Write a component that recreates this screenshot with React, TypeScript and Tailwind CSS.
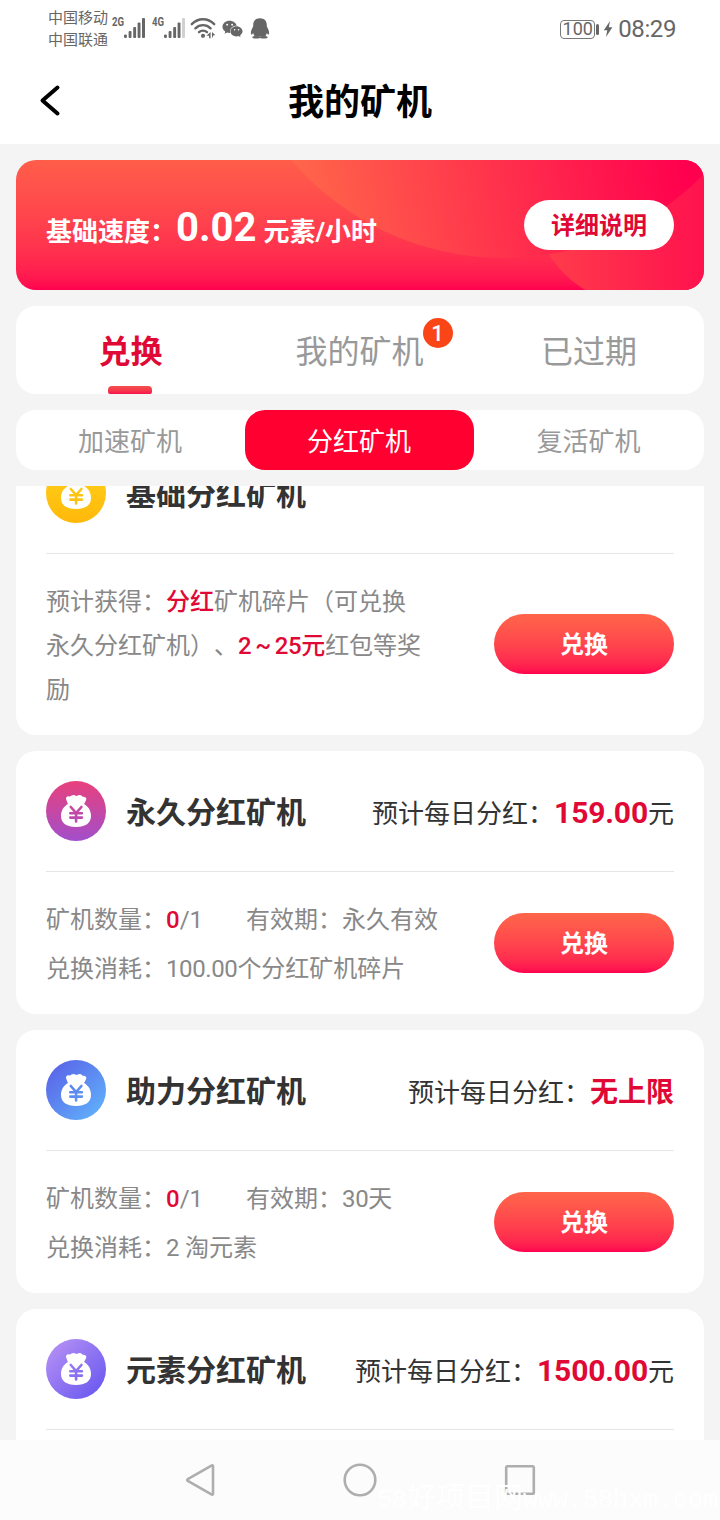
import React, { useState } from 'react'
import { FaWeixin } from 'react-icons/fa'

interface Miner {
  id: string
  name: string
  from: string
  to: string
  direction: 'down' | 'diagonal'
  daily: string
  unit?: string
  owned: string
  limit: string
  validity: string
  cost: string
}

const miners: Miner[] = [
  { id: 'forever', name: '永久分红矿机', from: '#e8407c', to: '#a24fcb', direction: 'down', daily: '159.00', unit: '元', owned: '0', limit: '1', validity: '永久有效', cost: '100.00个分红矿机碎片' },
  { id: 'boost', name: '助力分红矿机', from: '#5a68e8', to: '#60acfa', direction: 'diagonal', daily: '无上限', owned: '0', limit: '1', validity: '30天', cost: '2 淘元素' },
  { id: 'element', name: '元素分红矿机', from: '#b08cf4', to: '#6e5cf0', direction: 'diagonal', daily: '1500.00', unit: '元', owned: '0', limit: '1', validity: '30天', cost: '10 淘元素' },
]

const tabs = ['兑换', '我的矿机', '已过期']
const kinds = ['加速矿机', '分红矿机', '复活矿机']

// Sets runs of digits a little tighter than the Chinese text around them
const Mixed: React.FC<{ text: string }> = ({ text }) => (
  <>
    {text.split(/([\d.]+)/).map((part, i) => (i % 2 ? <span key={i} className="tracking-[-0.4px]">{part}</span> : part))}
  </>
)

const Signal: React.FC<{ label: string; weak?: boolean }> = ({ label, weak }) => (
  <div className="flex h-[22px] w-[33px] items-start">
    <span className="w-3 origin-left scale-x-[0.8] text-[12px] font-bold leading-[11px]">{label}</span>
    <svg width="21" height="22" viewBox="0 0 21 22" fill="currentColor" className="shrink-0">
      <rect x="0" y="17.5" width="2.9" height="3.5" rx="1.2" />
      <rect x="4.6" y="14" width="2.9" height="7" rx="1" />
      <rect x="9.2" y="10" width="2.9" height="11" rx="1" />
      <rect x="13.6" y="5.5" width="2.9" height="15.500" rx="1" />
      <rect x="18" y="1" width="3" height="20" rx="1" opacity={weak ? 0.3 : 1} />
    </svg>
  </div>
)

const StatusBar = () => (
  <div className="flex h-[58px] items-start bg-white pl-12 pr-[44px] text-[#666]">
    <div className="mt-[7px] w-[64px] shrink-0 text-[15px] leading-[22px]">
      <div>中国移动</div>
      <div>中国联通</div>
    </div>
    <div className="mt-[17px] flex">
      <Signal label="2G" />
      <div className="w-[7px]" />
      <Signal label="4G" weak />
      {/* Wifi with the traffic arrows */}
      <svg width="26" height="22" viewBox="0 0 26 22" fill="none" stroke="currentColor" strokeWidth="2.4" strokeLinecap="round" className="ml-[5px]">
        <path d="M1.800 7.200C8.200.6 17.800.6 24.200 7.200" />
        <path d="M5.400 11.300c4.300-4.200 10.900-4.200 15.200 0" />
        <path d="M9 15.200c2.300-2.100 5.700-2.100 8 0" />
        <circle cx="13" cy="18.800" r="2.100" fill="currentColor" stroke="none" />
        <path d="M20.600 15v6.200h-1.500v-2.400h-2.600zM22 21.200V15l3.400 3.200h-1.900z" fill="currentColor" stroke="none" />
      </svg>
      <FaWeixin className="ml-[6px] mt-[2px] h-5 w-[21px]" />
      {/* Penguin */}
      <svg width="20" height="23" viewBox="0 0 20 22" fill="currentColor" className="ml-[7px]">
        <path d="M10 .8C5.700.8 3.200 3.600 3.200 7.300v1.500C2.400 11 .900 12.700.900 15.300c0 1.600.5 2 1 1.700.5-.3 1-.9 1.300-1.400.3 1.300.8 2.500 1.700 3.300h10.200c.9-.8 1.400-2 1.700-3.300.3.5.8 1.100 1.300 1.400.5.3 1-.1 1-1.700 0-2.600-1.500-4.300-2.300-6.500V7.300C16.800 3.600 14.300.8 10 .8z" />
        <ellipse cx="6.300" cy="19.800" rx="4" ry="1.300" />
        <ellipse cx="13.700" cy="19.800" rx="4" ry="1.300" />
      </svg>
    </div>
    <div className="ml-auto mt-[15px] flex h-7 items-center">
      <span className="flex h-[19px] w-[35px] items-center justify-center rounded-[4px] border border-[#777] text-[18px] leading-none">100</span>
      <span className="ml-px h-[11px] w-[3px] rounded-sm bg-[#666]" />
      <svg width="10" height="18" viewBox="0 0 10 18" fill="currentColor" className="ml-[4px]">
        <path d="M7 1 .8 10.200h3.500L3 17l6.400-9.700H5.800z" />
      </svg>
      <span className="ml-[5px] text-[24px] leading-7 tracking-[-0.4px]">08:29</span>
    </div>
  </div>
)

const Header = () => (
  <div className="relative flex h-[86px] items-center justify-center bg-white text-black">
    <svg width="24" height="34" viewBox="0 0 24 34" fill="none" stroke="currentColor" strokeWidth="4" strokeLinecap="round" strokeLinejoin="round" className="absolute left-[38px] top-[26px]">
      <path d="M19.500 3.500 4.500 16.500l15 13" />
    </svg>
    <h1 className="pt-1 text-[36px] font-bold leading-[52px]">我的矿机</h1>
  </div>
)

const Banner = () => (
  <div className="relative flex h-[130px] items-center overflow-hidden rounded-[20px] bg-gradient-to-b from-[#ff5d4a] to-[#ff004f] px-[30px] text-white">
    <svg width="688" height="130" className="absolute inset-0">
      <defs>
        <linearGradient id="big" x1="290" x2="670" y1="60" y2="0" gradientUnits="userSpaceOnUse">
          <stop offset="0" stopColor="#ff654a" />
          <stop offset="1" stopColor="#ff004e" />
        </linearGradient>
        <linearGradient id="small" x1="530" x2="700" y1="0" y2="0" gradientUnits="userSpaceOnUse">
          <stop offset="0" stopColor="#ff3c4b" />
          <stop offset="1" stopColor="#ff0f4e" />
        </linearGradient>
      </defs>
      <circle cx="624" cy="38" r="107" fill="url(#small)" />
      <circle cx="488" cy="-182" r="280" fill="url(#big)" />
    </svg>
    <p className="relative flex items-baseline pt-[10px] text-[26px] font-bold leading-[60px]">
      基础速度：<span className="text-[40px]">0.02</span>
      <span className="ml-[7px]">元素/小时</span>
    </p>
    <button className="relative ml-auto h-[50px] w-[150px] rounded-full bg-white pt-[2px] text-[24px] font-bold text-[#e00936]">详细说明</button>
  </div>
)

const CoinBag: React.FC<{ id: string; from: string; to: string; direction: 'down' | 'diagonal' }> = ({ id, from, to, direction }) => (
  <svg width="60" height="60" viewBox="0 0 60 60" className="shrink-0">
    <defs>
      <linearGradient id={`bag-${id}`} gradientUnits="userSpaceOnUse" x1={direction === 'down' ? 30 : 8} y1={direction === 'down' ? 0 : 8} x2={direction === 'down' ? 30 : 52} y2={direction === 'down' ? 60 : 52}>
        <stop offset="0" stopColor={from} />
        <stop offset="1" stopColor={to} />
      </linearGradient>
    </defs>
    <circle cx="30" cy="30" r="30" fill={`url(#bag-${id})`} />
    <path
      d="M20.200 18.500c-.8-2 1-3.700 2.900-3.100 1 .2 1.600-.3 2.400-.9 1.500-.9 3-.7 4.300.2.600.4 1.200.3 1.800-.1 1.600-1 3.500-.7 4.500.6.400.5 1 .5 1.700.6 2.200.2 3.200 2 2.100 3.800l-1.800 3.500c4.200 2.400 6.900 6.600 6.900 11.900 0 7.200-5.400 10.900-15 10.900S15 42.200 15 35c0-5.300 2.700-9.500 6.900-11.900z"
      fill="white"
    />
    <path d="m24.800 26 5.300 6 5.300-6M24.300 32.300h11.600M24.300 36.600h11.600M30.100 32v8.500" fill="none" stroke={`url(#bag-${id})`} strokeWidth="2.600" strokeLinecap="round" />
  </svg>
)

const ExchangeButton = () => (
  <button className="h-[60px] w-[180px] shrink-0 rounded-full bg-gradient-to-b from-[#ff654a] to-[#ff004f] pt-[2px] text-[24px] font-bold text-white">兑换</button>
)

const MinerCard: React.FC<{ miner: Miner }> = ({ miner }) => (
  <div className="h-[263px] shrink-0 rounded-[20px] bg-white px-[30px]">
    <div className="flex h-[121px] items-center border-b border-[#e6e6e6]">
      <CoinBag id={miner.id} from={miner.from} to={miner.to} direction={miner.direction} />
      <h2 className="ml-5 pt-[2px] text-[30px] font-bold text-[#333]">{miner.name}</h2>
      <p className={`ml-auto flex items-baseline text-[26px] text-[#333] ${miner.unit ? 'pt-[2px]' : 'pt-[5px]'}`}>
        预计每日分红：
        <span className={`font-bold text-[#e00936] ${miner.unit ? 'text-[30px] tracking-[-0.15px]' : 'text-[28px]'}`}>{miner.daily}</span>
        {miner.unit}
      </p>
    </div>
    <div className="flex h-[142px] items-center justify-between text-[24px] leading-[49px] text-[#888]">
      <div className="pt-[4px]">
        <p className="flex">
          <span>
            矿机数量：<span className="font-medium text-[#e00936]">{miner.owned}</span>/{miner.limit}
          </span>
          <span className="ml-[43px]">
            有效期：
            <Mixed text={miner.validity} />
          </span>
        </p>
        <p>
          兑换消耗：
          <Mixed text={miner.cost} />
        </p>
      </div>
      <ExchangeButton />
    </div>
  </div>
)

const navIcons = [
  'M33 6.500v27c0 1-.8 1.400-1.600.9L7.800 21c-.8-.5-.8-1.500 0-2L31.400 5.600c.8-.5 1.600-.1 1.600.9z',
  'M20 4.700a15.300 15.300 0 1 1 0 30.600a15.300 15.300 0 1 1 0-30.600z',
  'M7.500 6.200h25c.8 0 1.300.5 1.300 1.300v25c0 .8-.5 1.300-1.300 1.300h-25c-.8 0-1.300-.5-1.300-1.300v-25c0-.8.5-1.300 1.300-1.300z',
]

const NavBar = () => (
  <div className="relative h-20 shrink-0 overflow-hidden bg-[#fcfcfc]">
    <div className="flex h-20 items-center justify-center gap-[120px] text-[#aeaeae]">
      {navIcons.map(d => (
        <svg key={d} width="40" height="40" viewBox="0 0 40 40" fill="none" stroke="currentColor" strokeWidth="2.600">
          <path d={d} />
        </svg>
      ))}
    </div>
    <div className="absolute right-[2px] top-[43px] flex h-9 items-center whitespace-nowrap font-['Liberation_Mono','Noto_Sans_CJK_SC',monospace] text-[25px] leading-9 text-white">
      <span>58</span>
      <span className="text-[29px]">好项目网</span>
      <span>www.58hxm.com</span>
    </div>
  </div>
)

export default function App() {
  const [tab, setTab] = useState(0)
  const [kind, setKind] = useState(1)

  return (
    <div className="flex h-[1520px] w-[720px] flex-col overflow-hidden bg-[#f4f4f4] font-[Roboto,'Noto_Sans_CJK_SC',sans-serif]">
      <StatusBar />
      <Header />
      <div className="flex min-h-0 flex-1 flex-col gap-4 px-4 pt-4">
        <Banner />

        {/* Main tabs */}
        <div className="grid h-[88px] shrink-0 grid-cols-[229px_229px_230px] rounded-[20px] bg-white">
          {tabs.map((t, i) => (
            <button
              key={t}
              onClick={() => setTab(i)}
              className={`relative flex items-center justify-center pt-1 text-[32px] ${i === tab ? 'font-bold text-[#e00936]' : 'text-[#999]'}`}
            >
              <span className="relative">
                {t}
                {i === 1 && (
                  <span className="absolute -top-[10px] -right-[29px] flex h-[30px] w-[30px] items-center justify-center rounded-full bg-[#fa4616] pt-[2px] text-[22px] font-medium leading-none text-white">1</span>
                )}
              </span>
              {i === tab && <span className="absolute bottom-0 left-[92px] h-2 w-11 rounded-t-[4px] rounded-b-[2px] bg-gradient-to-b from-[#f2504c] to-[#f8104c]" />}
            </button>
          ))}
        </div>

        {/* Miner kinds */}
        <div className="grid h-[60px] shrink-0 grid-cols-[229px_229px_230px] rounded-[20px] bg-white text-[26px]">
          {kinds.map((k, i) => (
            <button key={k} onClick={() => setKind(i)} className={`rounded-[20px] pr-px pt-1 ${i === kind ? 'bg-[#ff0030] text-white' : 'text-[#999]'}`}>
              {k}
            </button>
          ))}
        </div>

        {/* Miner list, scrolled a little */}
        <div className="min-h-0 flex-1 overflow-hidden">
          <div className="-mt-[53px] flex flex-col gap-4">
            <div className="h-[302px] shrink-0 rounded-[20px] bg-white px-[30px]">
              <div className="flex h-[121px] items-center border-b border-[#e6e6e6]">
                <CoinBag id="basic" from="#ffd21c" to="#ffb80a" direction="down" />
                <h2 className="ml-5 pt-[2px] text-[30px] font-bold text-[#333]">基础分红矿机</h2>
              </div>
              <div className="flex h-[180px] items-center justify-between">
                <p className="pt-[4px] text-[24px] leading-[44px] text-[#888] [text-spacing-trim:space-all]">
                  预计获得：<span className="font-medium text-[#e00936]">分红</span>矿机碎片（可兑换
                  <br />
                  永久分红矿机）、
                  <span className="font-medium text-[#e00936]">
                    2<span className="inline-block w-[23px] text-center">~</span>
                    <span className="tracking-[-0.4px]">25</span>元
                  </span>
                  红包等奖
                  <br />励
                </p>
                <ExchangeButton />
              </div>
            </div>
            {miners.map(m => (
              <MinerCard key={m.id} miner={m} />
            ))}
          </div>
        </div>
      </div>
      <NavBar />
    </div>
  )
}
